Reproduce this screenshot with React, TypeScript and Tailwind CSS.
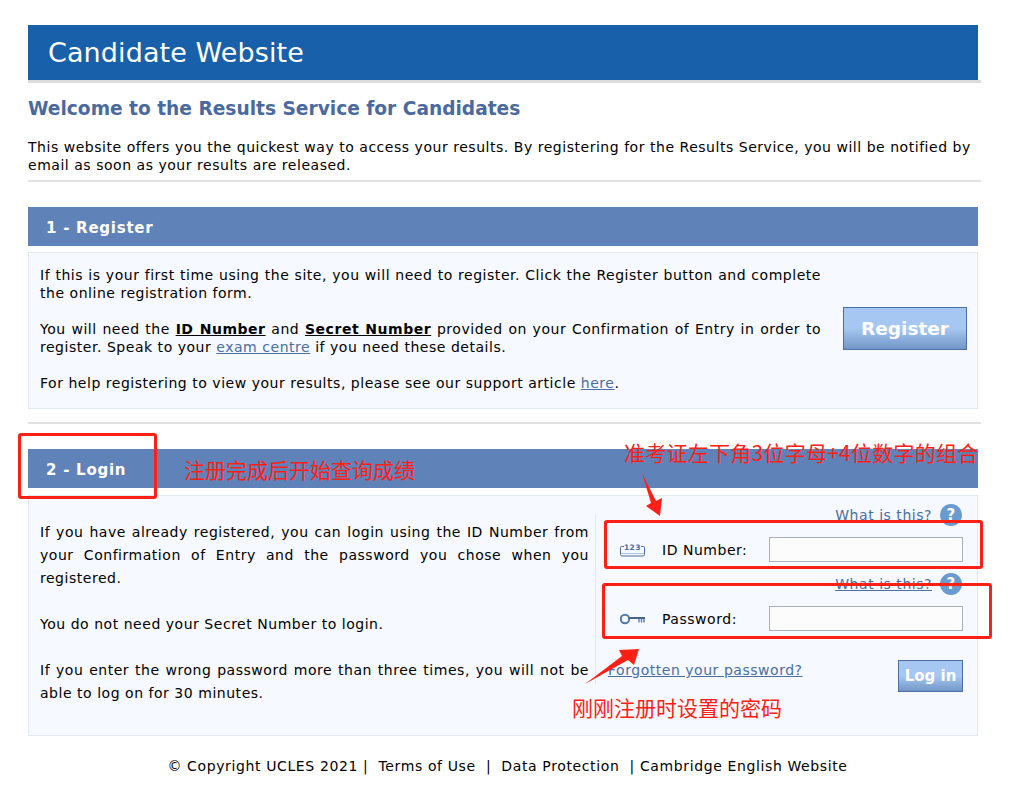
const font = { fontFamily: '"DejaVu Sans", Verdana, sans-serif' };
const cjk = { fontFamily: '"Noto Sans CJK SC", sans-serif' };

const WhatIsThis = ({ className }: { className: string }) => (
  <div className={`flex items-center justify-end gap-[8px] pr-[1px] ${className}`}>
    <a className="mt-[1px] text-[14px] leading-[17px] text-[#4a6ea5] underline">What is this?</a>
    <span className="flex h-[22px] w-[22px] items-center justify-center rounded-full bg-[#6a9bd0] text-[15px] font-bold text-white">?</span>
  </div>
);

const IdIcon = () => (
  <svg width="25" height="14" viewBox="0 0 25 14" fill="none">
    <path d="M4 3.500H1.500A1 1 0 0 0 .5 4.500v7a1.500 1.500 0 0 0 1.500 1.500h21a1.500 1.500 0 0 0 1.500-1.500v-7a1 1 0 0 0-1-1H21" stroke="#4a6ea5" strokeWidth="1" />
    <path d="M1 10.500h23" stroke="#a9c0de" strokeWidth="1" />
    <text x="12.500" y="7" textAnchor="middle" fontSize="7.500" fontWeight="700" fill="#4a6ea5">123</text>
  </svg>
);

const KeyIcon = () => (
  <svg width="25" height="12" viewBox="0 0 25 12" fill="none">
    <circle cx="5" cy="6" r="4.200" stroke="#5078b0" strokeWidth="2" />
    <path d="M9 5H25" stroke="#44658f" strokeWidth="2" />
    <path d="M19 6v3.500M21.500 6v3.500M24 6v3.500" stroke="#6a86aa" strokeWidth="1.500" />
  </svg>
);

export default function App() {
  return (
    <div style={font} className="relative h-[799px] w-[1032px] overflow-hidden bg-white pt-[25px] pl-[28px] text-[14px] tracking-[0.53px] text-black">
      {/* Title bar */}
      <div className="flex h-[55px] w-[950px] items-center bg-[#1860a9] pt-[2px] pl-[20px] text-[27px] tracking-[0.1px] text-white">Candidate Website</div>
      <div className="h-[3px] w-[953px] bg-[#dcdcdc]" />

      <h1 className="mt-[14px] text-[18.6px] leading-[24px] font-bold tracking-normal text-[#4a6a9f]">Welcome to the Results Service for Candidates</h1>
      <p className="mt-[17px] w-[950px] leading-[18px]">
        This website offers you the quickest way to access your results. By registering for the Results Service, you will be notified by email as soon as your results are released.
      </p>
      <div className="mt-[6px] h-[2px] w-[953px] bg-[#e2e2e2]" />

      {/* Register */}
      <div className="mt-[25px] flex h-[39px] w-[950px] items-center bg-[#5f83b9] pt-[3px] pl-[18px] text-[15px] font-bold tracking-[0.75px] text-white">1 - Register</div>
      <div className="mt-[6px] flex h-[157px] w-[950px] items-start border border-[#e1e8f4] bg-[#f6f9ff] pl-[11px]">
        <div className="mt-[13px] w-[781px] text-justify leading-[18px]">
          <p>If this is your first time using the site, you will need to register. Click the Register button and complete the online registration form.</p>
          <p className="mt-[18px]">
            You will need the <b className="underline">ID Number</b> and <b className="underline">Secret Number</b> provided on your Confirmation of Entry in order to register. Speak to your <a className="text-[#4a6ea5] underline">exam centre</a> if you need these details.
          </p>
          <p className="mt-[18px]">For help registering to view your results, please see our support article <a className="text-[#4a6ea5] underline">here</a>.</p>
        </div>
        <button className="mt-[54px] ml-[22px] h-[43px] w-[124px] border border-[#4a6ea5] bg-gradient-to-b from-[#a6c7f1] from-50% to-[#7397c8] text-[18.5px] font-bold tracking-normal text-white">Register</button>
      </div>

      <div className="mt-[13px] h-[2px] w-[953px] bg-[#e2e2e2]" />

      {/* Login */}
      <div className="mt-[25px] flex h-[39px] w-[950px] items-center bg-[#5f83b9] pt-[3px] pl-[18px] text-[15px] font-bold tracking-[0.75px] text-white">2 - Login</div>
      <div className="mt-[7px] flex h-[241px] w-[950px] border border-[#e1e8f4] bg-[#f6f9ff] pl-[11px]">
        <div className="mt-[25px] w-[549px] text-justify leading-[23px]">
          <p>If you have already registered, you can login using the ID Number from your Confirmation of Entry and the password you chose when you registered.</p>
          <p className="mt-[23px]">You do not need your Secret Number to login.</p>
          <p className="mt-[23px]">If you enter the wrong password more than three times, you will not be able to log on for 30 minutes.</p>
        </div>
        <div className="mt-[18px] ml-[6px] h-[170px] w-[368px] border-l border-[#e1e8f4]">
          <WhatIsThis className="mt-[-10px] h-[22px]" />
          <div className="mt-[11px] flex h-[25px] items-center">
            <span className="ml-[24px] w-[42px]"><IdIcon /></span>
            <span className="mt-[2px] w-[107px]">ID Number:</span>
            <input className="h-[25px] w-[194px] border border-[#a9b0b8] bg-[#fcfcfc]" />
          </div>
          <WhatIsThis className="mt-[11px] h-[22px]" />
          <div className="mt-[11px] flex h-[25px] items-center">
            <span className="ml-[24px] w-[42px]"><KeyIcon /></span>
            <span className="mt-[2px] w-[107px]">Password:</span>
            <input className="h-[25px] w-[194px] border border-[#a9b0b8] bg-[#fcfcfc]" />
          </div>
          <div className="mt-[29px] flex items-start justify-between">
            <a className="ml-[12px] text-[#4a6ea5] underline">Forgotten your password?</a>
            <button className="h-[32px] w-[65px] border border-[#4a6ea5] bg-gradient-to-b from-[#a6c7f1] from-50% to-[#7397c8] text-[15px] font-bold tracking-normal text-white">Log in</button>
          </div>
        </div>
      </div>

      {/* Footer */}
      <div className="mt-[21px] flex w-[950px] justify-center pl-[9px] leading-[18px] tracking-[0.62px] whitespace-pre">
        © Copyright UCLES 2021 |  Terms of Use  |  Data Protection  | Cambridge English Website
      </div>

      {/* Red annotations drawn over the page */}
      <div className="absolute top-[433px] left-[18px] h-[66px] w-[139px] rounded-[3px] border-[3px] border-[#ff2015]" />
      <div className="absolute top-[520px] left-[604px] h-[49px] w-[379px] rounded-[3px] border-[3px] border-[#ff2015]" />
      <div className="absolute top-[583px] left-[602px] h-[56px] w-[390px] rounded-[3px] border-[3px] border-[#ff2015]" />
      <span className="absolute top-[456px] left-[184px] text-[21px] leading-[26px] tracking-normal whitespace-nowrap text-[#ff2015]" style={cjk}>注册完成后开始查询成绩</span>
      <span className="absolute top-[439px] left-[624px] text-[21px] leading-[26px] tracking-[0.25px] whitespace-nowrap text-[#ff2015]" style={cjk}>准考证左下角3位字母+4位数字的组合</span>
      <span className="absolute top-[694px] left-[572px] text-[21px] leading-[26px] tracking-normal whitespace-nowrap text-[#ff2015]" style={cjk}>刚刚注册时设置的密码</span>
      <svg className="absolute top-0 left-0" width="1032" height="799" fill="#ff2015">
        <polygon points="642,473 656,501 662,498 660,516 646,506 651,503" />
        <polygon points="585,684 622,656 619,650 639,649 634,665 628,660" />
      </svg>
    </div>
  );
}
